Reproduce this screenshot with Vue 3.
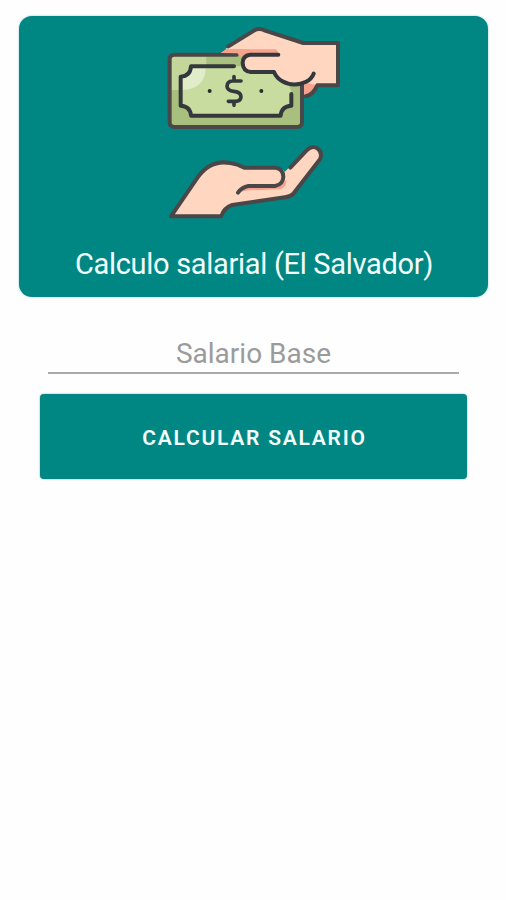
<template>
  <div class="salario-wrap">
    <div class="header-card">
      <svg class="logo" viewBox="0 0 570 600" fill="none" stroke-linecap="round" stroke-linejoin="round">
        <!-- billete -->
        <path class="shade" d="M178 98 L235 60 H370 L472 185 Q458 222 430 228 H400 V110 H178 Z" />
        <rect class="bill" x="29" y="101" width="397" height="217" rx="12" />
        <path class="bill-light" d="M34 207 V115 Q34 106 44 106 H139 V140 A73 70 0 0 1 66 207 Z" />
        <path class="bill-inner" d="M93 136 H360 L394 210 V254 Q364 256 362 284 H93 Q91 256 62 254 V167 Q91 165 93 136 Z" />
        <path class="bill-shine" d="M93 136 H137 Q139 202 70 207 H62 V167 Q91 165 93 136 Z" />
        <path class="line soft" d="M230 101 H43 Q29 101 29 115 V304 Q29 318 43 318 H412 Q426 318 426 304 V190" />
        <path class="line" d="M222 136 H93 Q91 165 62 167 V254 Q91 256 93 284 H362 Q364 256 394 254 V219" />
        <path class="line dollar" d="M243 180 H218 Q201 181 201 196 Q202 209 222 211 Q243 213 243 228 Q241 241 227 241 H205 M222 167 V178 M222 243 V253" />
        <circle class="dot" cx="149" cy="210" r="6" />
        <circle class="dot" cx="304" cy="210" r="6" />
        <!-- mano superior -->
        <path class="skin" d="M195 85 L285 29 Q297 21 311 28 L430 66 H534 V193 H471 L440 185 Q422 190 398 189 Q360 184 342 153 H270 Q247 149 247 126 Q248 105 267 101 V85 Z" />
        <path class="shade" d="M183 96 L200 85 H348 Q356 91 356 99 H268 L250 113 L232 97 Z" />
        <path class="line soft" d="M205 76 L282 29 Q297 20 313 28 L430 66 H534 V193 H472 Q459 222 437 226" />
        <path class="line" d="M355 101 H270 Q248 104 248 126 Q249 151 272 153 H342 C363 203 444 201 461 158" />
        <!-- mano inferior -->
        <path class="skin" d="M33 586 L113 469 Q151 415 211 426 Q232 429 253 440 H348 Q371 442 374 453 L441 385 Q456 372 473 384 Q490 397 480 415 L402 516 Q394 526 378 529 L217 552 Q192 560 185 586 Z" />
        <path class="shade" d="M237 514 Q245 499 265 496 H346 Q366 492 379 477 Q380 498 360 505 L265 508 Z" />
        <path class="line soft" d="M391 440 L440 388 Q456 372 472 382 Q489 394 480 415 L401 517 Q392 527 375 529 L217 552 Q191 561 184 586 H33 L113 469 Q151 415 211 426 Q232 429 253 440 H347 Q370 444 370 468 Q369 490 345 495 H265 Q246 498 234 515" />
      </svg>
      <h1>Calculo salarial (El Salvador)</h1>
    </div>
    <form class="salario-form" @submit.prevent>
      <input v-model="salarioBase" type="text" inputmode="decimal" placeholder="Salario Base" />
      <button type="submit">CALCULAR SALARIO</button>
    </form>
  </div>
</template>

<script setup>
import { ref } from 'vue'

const salarioBase = ref('')
</script>

<style>
body {
  background: #fefefe;
}
</style>

<style scoped>
.salario-wrap {
  box-sizing: border-box;
  min-height: 100vh;
  padding: 16px 18px 0 19px;
  background: #fefefe;
  font-family: Roboto, "Liberation Sans", sans-serif;
}
.header-card {
  box-sizing: border-box;
  height: 281px;
  padding: 5px 0 0 1px;
  display: flex;
  flex-direction: column;
  align-items: center;
  background: #008783;
  border-radius: 13px;
  box-shadow: 0 0 2px #00878380;
}
.logo {
  width: 190px;
  height: 200px;
  margin-left: 2px;
}
.header-card h1 {
  margin: 26px 0 0;
  color: #f4ffff;
  font-size: 29px;
  font-weight: 400;
  line-height: 34px;
  letter-spacing: -0.3px;
  white-space: nowrap;
}
.line {
  stroke: #34383d;
  stroke-width: 12;
}
.soft {
  stroke: #4b4748;
}
.dollar {
  stroke-width: 11;
}
.dot {
  fill: #292d31;
}
.skin {
  fill: #ffd7c1;
}
.shade {
  fill: #f5a38c;
}
.bill {
  fill: #a9bf7d;
}
.bill-light {
  fill: #c4d79b;
}
.bill-inner {
  fill: #c7dc9e;
}
.bill-shine {
  fill: #e0edc8;
}
.salario-form {
  display: flex;
  flex-direction: column;
  padding: 33px 21px 0;
}
.salario-form input {
  height: 44px;
  box-sizing: border-box;
  margin: 0 8px;
  padding: 4px 0 0;
  border: none;
  border-bottom: 2px solid #a9a9a9;
  outline: none;
  background: transparent;
  color: #333;
  font-family: inherit;
  font-size: 28px;
  text-align: center;
}
.salario-form input::placeholder {
  color: #9b9b9b;
  opacity: 1;
}
.salario-form button {
  height: 85px;
  margin-top: 20px;
  padding: 2px 0 0 2px;
  border: none;
  border-radius: 4px;
  background: #008783;
  box-shadow: 0 0 2px #0006;
  color: #f4ffff;
  font-family: inherit;
  font-size: 21px;
  font-weight: 600;
  letter-spacing: 1.75px;
  cursor: pointer;
}
</style>
